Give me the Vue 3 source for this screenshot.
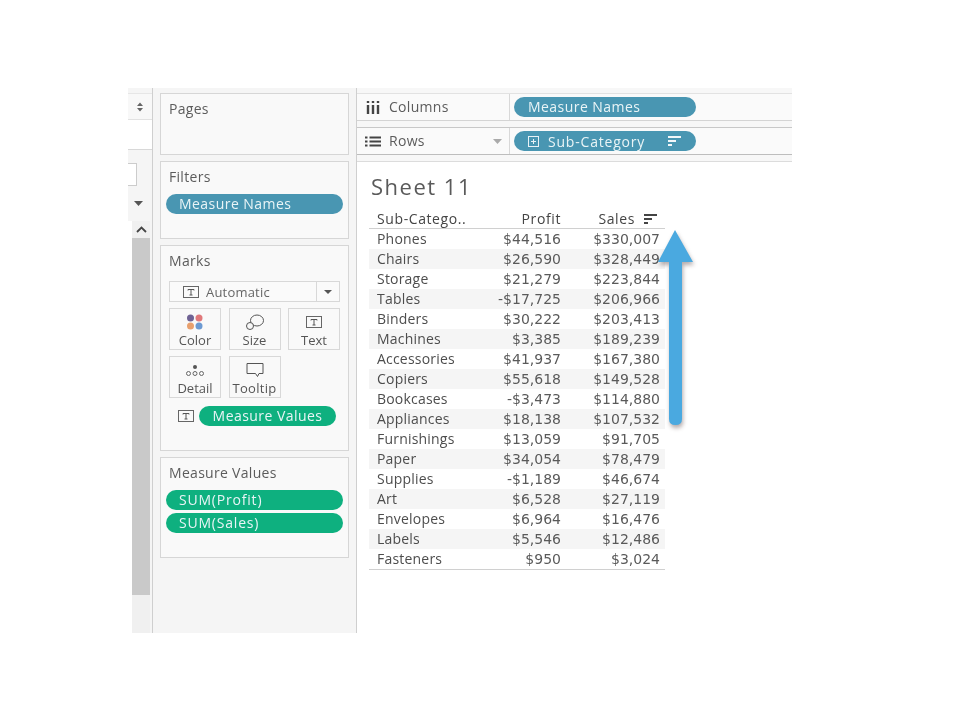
<script setup>
const rows = [
  ['Phones', '$44,516', '$330,007'], ['Chairs', '$26,590', '$328,449'], ['Storage', '$21,279', '$223,844'],
  ['Tables', '-$17,725', '$206,966'], ['Binders', '$30,222', '$203,413'], ['Machines', '$3,385', '$189,239'],
  ['Accessories', '$41,937', '$167,380'], ['Copiers', '$55,618', '$149,528'], ['Bookcases', '-$3,473', '$114,880'],
  ['Appliances', '$18,138', '$107,532'], ['Furnishings', '$13,059', '$91,705'], ['Paper', '$34,054', '$78,479'],
  ['Supplies', '-$1,189', '$46,674'], ['Art', '$6,528', '$27,119'], ['Envelopes', '$6,964', '$16,476'],
  ['Labels', '$5,546', '$12,486'], ['Fasteners', '$950', '$3,024'],
]
</script>

<template>
  <div class="page">
    <div class="shot">
      <aside class="strip">
        <div class="strip-top"><svg width="8" height="10" viewBox="0 0 8 10"><path d="M4 0.500 7 4H1zM4 9.500 1 6h6z" fill="#666"/></svg></div>
        <div class="strip-white"></div>
        <div class="strip-input"><div class="input-box"></div></div>
        <div class="strip-caret"><svg width="9" height="5" viewBox="0 0 9 5"><path d="M0 0h9L4.500 5z" fill="#555"/></svg></div>
        <div class="scroll">
          <div class="scroll-up"><svg width="11" height="7" viewBox="0 0 11 7"><path d="M1 6 5.500 1.500 10 6" fill="none" stroke="#444" stroke-width="1.800"/></svg></div>
          <div class="scroll-thumb"></div>
          <div class="scroll-rest"></div>
        </div>
      </aside>

      <section class="side">
        <div class="card pages"><div class="card-title">Pages</div></div>
        <div class="card filters">
          <div class="card-title">Filters</div>
          <div class="pill blue wide">Measure Names</div>
        </div>
        <div class="card marks">
          <div class="card-title">Marks</div>
          <div class="select">
            <span class="select-main">
              <svg class="t-icon" width="16" height="12" viewBox="0 0 16 12"><rect x="0.500" y="0.500" width="15" height="11" fill="none" stroke="#666"/><path d="M5 3.500h6M8 3.500v5.500M6.500 9h3M5 3.500v1M11 3.500v1" stroke="#555" fill="none"/></svg>
              Automatic
            </span>
            <span class="select-caret"><svg width="8" height="4" viewBox="0 0 8 4"><path d="M0 0h8L4 4z" fill="#555"/></svg></span>
          </div>
          <div class="mark-grid">
            <div class="mark">
              <svg width="20" height="16" viewBox="0 0 20 16"><circle cx="5.500" cy="4" r="3.500" fill="#6f6294"/><circle cx="14" cy="4" r="3.500" fill="#e0787a"/><circle cx="5.500" cy="12" r="3.500" fill="#e8a06e"/><circle cx="14" cy="12" r="3.500" fill="#6c9ad2"/></svg>
              <span>Color</span>
            </div>
            <div class="mark">
              <svg width="20" height="16" viewBox="0 0 20 16"><ellipse cx="12" cy="6.500" rx="6.500" ry="5.500" fill="none" stroke="#555"/><circle cx="5" cy="12" r="3.500" fill="#f8f8f8" stroke="#555"/></svg>
              <span>Size</span>
            </div>
            <div class="mark">
              <svg width="16" height="16" viewBox="0 0 16 16"><rect x="0.500" y="2.500" width="15" height="11" fill="none" stroke="#666"/><path d="M5 5.500h6M8 5.500v5.500M6.500 11h3M5 5.500v1M11 5.500v1" stroke="#555" fill="none"/></svg>
              <span>Text</span>
            </div>
            <div class="mark">
              <svg width="20" height="16" viewBox="0 0 20 16"><circle cx="10" cy="5" r="2" fill="#555"/><circle cx="3.500" cy="11.500" r="2" fill="none" stroke="#666"/><circle cx="10" cy="11.500" r="2" fill="none" stroke="#666"/><circle cx="16.500" cy="11.500" r="2" fill="none" stroke="#666"/></svg>
              <span>Detail</span>
            </div>
            <div class="mark">
              <svg width="18" height="16" viewBox="0 0 18 16"><path d="M1 1.500h16v10h-4l-1.500 3-2-3H1z" fill="none" stroke="#555"/></svg>
              <span class="tooltip-label">Tooltip</span>
            </div>
          </div>
          <div class="encoding">
            <svg width="16" height="12" viewBox="0 0 16 12"><rect x="0.500" y="0.500" width="15" height="11" fill="none" stroke="#666"/><path d="M5 3.500h6M8 3.500v5.500M6.500 9h3M5 3.500v1M11 3.500v1" stroke="#555" fill="none"/></svg>
            <div class="pill green values">Measure Values</div>
          </div>
        </div>
        <div class="card mv">
          <div class="card-title">Measure Values</div>
          <div class="pill green wide sum">SUM(Profit)</div>
          <div class="pill green wide sum second">SUM(Sales)</div>
        </div>
      </section>

      <main class="main">
        <div class="shelf">
          <div class="shelf-label cols-label">
            <svg width="14" height="13" viewBox="0 0 14 13"><path d="M2 4v9M7 4v9M12 4v9" stroke="#444" stroke-width="2.400"/><path d="M2 0v2M7 0v2M12 0v2" stroke="#444" stroke-width="2.400"/></svg>
            <span>Columns</span>
          </div>
          <div class="shelf-body"><div class="pill blue shelf-pill">Measure Names</div></div>
        </div>
        <div class="shelf rows-shelf">
          <div class="shelf-label">
            <svg width="16" height="11" viewBox="0 0 16 11"><path d="M0 1.500h2.500M0 5.500h2.500M0 9.500h2.500M4.500 1.500H16M4.500 5.500H16M4.500 9.500H16" stroke="#444" stroke-width="2"/></svg>
            <span>Rows</span>
            <svg class="rows-caret" width="9" height="5" viewBox="0 0 9 5"><path d="M0 0h9L4.500 5z" fill="#aaa"/></svg>
          </div>
          <div class="shelf-body">
            <div class="pill blue shelf-pill sub">
              <svg width="11" height="11" viewBox="0 0 11 11"><rect x="0.500" y="0.500" width="10" height="10" fill="none" stroke="#e8f2f6"/><path d="M3 5.500h5M5.500 3v5" stroke="#e8f2f6"/></svg>
              <span class="sub-name">Sub-Category</span>
              <svg width="13" height="10" viewBox="0 0 13 10"><path d="M0 1h13M0 5h8M0 9h4" stroke="#f2f7f9" stroke-width="2"/></svg>
            </div>
          </div>
        </div>
        <div class="sheet">
          <h1>Sheet 11</h1>
          <div class="table">
            <div class="row head">
              <span>Sub-Catego..</span>
              <span class="num-head">Profit</span>
              <span class="num-head sales-head">Sales <svg width="13" height="10" viewBox="0 0 13 10"><path d="M0 1h13M0 5h8M0 9h4" stroke="#444" stroke-width="2"/></svg></span>
            </div>
            <div v-for="r in rows" :key="r[0]" class="row">
              <span class="name">{{ r[0] }}</span>
              <span class="num">{{ r[1] }}</span>
              <span class="num">{{ r[2] }}</span>
            </div>
          </div>
          <svg class="arrow" width="46" height="206" viewBox="0 0 46 206">
            <path d="M11 32H0L17 0 35 32H24V189q0 6-6.500 6T11 189z" fill="#4aa9e0"/>
          </svg>
        </div>
      </main>
    </div>
  </div>
</template>

<style scoped>
.page {
  width: 960px;
  height: 720px;
  background: #fff;
  padding: 88px 168px 87px 128px;
  box-sizing: border-box;
  font-family: "Open Sans", "Liberation Sans", sans-serif;
  color: #555;
  overflow: hidden;
}
.shot {
  display: flex;
  height: 545px;
  background: #f7f7f7;
  filter: blur(0.35px);
}
.strip {
  width: 25px;
  flex: none;
  box-sizing: border-box;
  background: #f5f5f5;
  border-right: 1px solid #cfcfcf;
  display: flex;
  flex-direction: column;
  padding-top: 5px;
}
.strip-top {
  height: 27px;
  display: flex;
  align-items: center;
  justify-content: center;
  box-sizing: border-box;
  background: #f8f8f8;
  border-top: 1px solid #e6e6e6;
  border-bottom: 1px solid #e2e2e2;
}
.strip-white {
  height: 29px;
  background: #fff;
  border-bottom: 1px solid #d8d8d8;
}
.strip-input { padding-top: 13px; }
.input-box {
  width: 8px;
  height: 21px;
  background: #fff;
  border: 1px solid #ccc;
  border-left: 0;
}
.strip-caret {
  height: 35px;
  display: flex;
  align-items: center;
  justify-content: flex-end;
  padding-right: 9px;
}
.scroll {
  border-left: 4px solid #fff;
  width: 18px;
  flex: 1;
  display: flex;
  flex-direction: column;
}
.scroll-up {
  height: 17px;
  background: #f0f0f0;
  display: flex;
  align-items: center;
  justify-content: center;
}
.scroll-thumb { height: 357px; background: #c9c9c9; }
.scroll-rest { flex: 1; background: #f0f0f0; }

.side {
  width: 204px;
  flex: none;
  box-sizing: border-box;
  background: #f5f5f5;
  border-right: 1px solid #cfcfcf;
  padding: 5px 7px 0 7px;
  display: flex;
  flex-direction: column;
  gap: 6px;
}
.card {
  box-sizing: border-box;
  background: #f9f9f9;
  border: 1px solid #d6d6d6;
  padding: 0 5px;
}
.card-title {
  font-size: 14px;
  line-height: 18px;
  letter-spacing: 0.300px;
  padding: 6px 3px 0;
  color: #5c5c5c;
}
.pages { height: 62px; }
.filters { height: 78px; }
.marks { height: 206px; }
.mv { height: 101px; }
.filters .card-title { margin-bottom: 8px; }
.mv .card-title { margin-bottom: 8px; }
.pill {
  height: 20px;
  line-height: 19px;
  border-radius: 10px;
  color: #e9f4f6;
  font-size: 14px;
  letter-spacing: 0.450px;
  white-space: nowrap;
}
.blue { background: #4996b2; }
.green { background: #0eb07f; }
.wide { padding-left: 13px; }
.sum { letter-spacing: 0.800px; }
.second { margin-top: 3px; }

.select {
  margin: 11px 3px 0;
  height: 21px;
  box-sizing: border-box;
  border: 1px solid #d8d8d8;
  display: flex;
  background: #fafafa;
  font-size: 13px;
  color: #666;
  letter-spacing: 0.200px;
}
.select-main {
  flex: 1;
  display: flex;
  align-items: center;
  gap: 7px;
  padding-left: 13px;
}
.select-caret {
  width: 22px;
  border-left: 1px solid #d8d8d8;
  display: flex;
  align-items: center;
  justify-content: center;
}
.mark-grid {
  margin: 6px 3px 0;
  display: grid;
  grid-template-columns: 52px 52px 52px;
  grid-auto-rows: 42px;
  column-gap: 7.500px;
  row-gap: 6px;
}
.mark {
  box-sizing: border-box;
  border: 1px solid #d8d8d8;
  display: flex;
  flex-direction: column;
  align-items: center;
  justify-content: flex-end;
  gap: 3px;
  font-size: 13px;
  line-height: 15px;
  padding-bottom: 1px;
  color: #555;
}
.tooltip-label { letter-spacing: 0.300px; }
.encoding {
  margin: 8px 0 0 12px;
  display: flex;
  align-items: center;
  gap: 5px;
}
.values {
  width: 137px;
  text-align: center;
}

.main {
  flex: 1;
  min-width: 0;
  padding-top: 5px;
  display: flex;
  flex-direction: column;
  background: #f7f7f7;
}
.shelf {
  height: 28px;
  box-sizing: border-box;
  display: flex;
  background: #fafafa;
  border-top: 1px solid #e2e2e2;
  border-bottom: 1px solid #d4d4d4;
}
.rows-shelf {
  margin-top: 6px;
  border-top: 1px solid #c8c8c8;
  border-bottom: 1px solid #bdbdbd;
}
.shelf-label {
  width: 153px;
  flex: none;
  box-sizing: border-box;
  border-right: 1px solid #d8d8d8;
  display: flex;
  align-items: center;
  gap: 8px;
  padding-left: 8px;
  font-size: 14px;
  letter-spacing: 0.300px;
  line-height: 24px;
  color: #5c5c5c;
}
.cols-label { padding-left: 9px; gap: 9px; }
.rows-caret { margin-left: auto; margin-right: 7px; }
.shelf-body {
  flex: 1;
  display: flex;
  align-items: center;
  padding-left: 4px;
}
.shelf-pill {
  width: 182px;
  box-sizing: border-box;
  padding-left: 14px;
}
.sub {
  display: flex;
  align-items: center;
}
.sub-name { margin-left: 9px; margin-right: 23px; letter-spacing: 0.800px; }
.sheet {
  flex: 1;
  position: relative;
  margin-top: 6px;
  background: #fff;
  border-top: 1px solid #dcdcdc;
  padding: 0 0 0 12px;
}
h1 {
  margin: 0;
  font-weight: 400;
  font-size: 22px;
  line-height: 28px;
  padding: 10px 0 0 2px;
  letter-spacing: 1.500px;
  color: #5a5a5a;
}
.table {
  margin-top: 9px;
  width: 296px;
  border-bottom: 1px solid #d0d0d0;
  font-size: 14px;
}
.row {
  display: grid;
  grid-template-columns: 107px 77px 99px;
  height: 20px;
  line-height: 20px;
  padding-left: 8px;
  box-sizing: border-box;
}
.row:nth-child(odd) { background: #f5f5f5; }
.row.head {
  background: #fff;
  border-bottom: 1px solid #d0d0d0;
  color: #444;
  letter-spacing: 0.600px;
  line-height: 19px;
}
.name { color: #4d4d4d; letter-spacing: 0.200px; }
.num-head { text-align: right; white-space: nowrap; }
.num {
  font-family: "DejaVu Sans", sans-serif;
  font-size: 14px;
  text-align: right;
  color: #5a5a5a;
  white-space: nowrap;
}
.sales-head {
  display: flex;
  justify-content: flex-end;
  align-items: center;
  gap: 9px;
  padding-right: 3px;
}
.arrow {
  position: absolute;
  left: 301px;
  top: 68px;
  filter: drop-shadow(1px 3px 2px rgba(90, 70, 70, 0.45));
}
</style>
